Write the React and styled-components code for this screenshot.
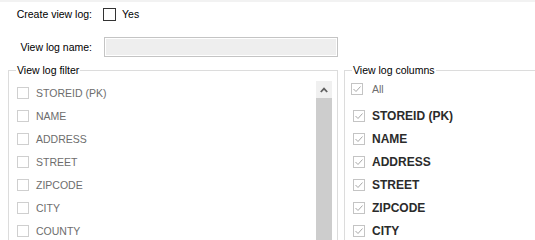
import React from 'react';
import styled, { createGlobalStyle } from 'styled-components';

const GlobalStyle = createGlobalStyle`
  html, body {
    margin: 0;
    background: #ffffff;
    overflow: hidden;
  }
  body {
    font-family: "Liberation Sans", Arial, sans-serif;
    font-size: 10.5px;
    color: #000;
  }
`;

const filterColumns = ['STOREID (PK)', 'NAME', 'ADDRESS', 'STREET', 'ZIPCODE', 'CITY', 'COUNTY'];
const logColumns = ['STOREID (PK)', 'NAME', 'ADDRESS', 'STREET', 'ZIPCODE', 'CITY'];

const Page = styled.div`
  width: 535px;
  height: 240px;
  overflow: hidden;
`;

const TopStrip = styled.div`
  height: 2px;
  background: #f2f2f2;
`;

const Form = styled.div`
  display: grid;
  grid-template-columns: 92px auto;
  column-gap: 11px;
  row-gap: 16px;
  align-items: center;
  padding-top: 6px;
`;

const Label = styled.div`
  text-align: right;
  line-height: 13px;
  white-space: nowrap;
`;

const Inline = styled.div`
  display: flex;
  align-items: center;
  gap: 6px;
  line-height: 13px;
`;

const Box = styled.span`
  box-sizing: border-box;
  display: inline-flex;
  align-items: center;
  justify-content: center;
  flex: none;
  width: ${({ $size }) => $size || 12}px;
  height: ${({ $size }) => $size || 12}px;
  border: 1px solid ${({ $border }) => $border || '#cfcfcf'};
  background: #fff;
`;

const NameInput = styled.div`
  box-sizing: border-box;
  margin-left: 1px;
  width: 234px;
  height: 20px;
  border: 1px solid #c4c4c4;
  box-shadow: inset 0 0 0 1px #ffffff;
  background: #eeeeee;
`;

const Groups = styled.div`
  display: flex;
  gap: 6px;
  margin-top: 7px;
  padding-left: 8px;
`;

const Group = styled.fieldset`
  box-sizing: border-box;
  margin: 0;
  padding: 0;
  border: 1px solid #dcdcdc;
  width: ${({ $width }) => $width}px;
  height: 200px;
  flex: none;
  min-width: 0;
`;

const Legend = styled.legend`
  margin-left: 7px;
  padding: 0 1px;
  line-height: 12px;
  white-space: nowrap;
`;

const FilterBody = styled.div`
  display: flex;
  margin-top: 5px;
  padding-left: 8px;
  padding-right: 5px;
`;

const List = styled.div`
  flex: 1;
  display: flex;
  flex-direction: column;
`;

const Row = styled.div`
  display: flex;
  align-items: center;
  height: 23px;
  gap: ${({ $gap }) => $gap || 7}px;
  padding-left: ${({ $indent }) => $indent || 0}px;
  color: ${({ $bold }) => ($bold ? '#2b2b2b' : '#6d6d6d')};
  font-weight: ${({ $bold }) => ($bold ? 700 : 400)};
  font-size: ${({ $bold }) => ($bold ? 12 : 10.5)}px;
  white-space: nowrap;
`;

const Scrollbar = styled.div`
  width: 16px;
  display: flex;
  flex-direction: column;
  flex: none;
`;

const ArrowButton = styled.div`
  height: 17px;
  background: #f0f0f0;
  display: flex;
  align-items: center;
  justify-content: center;
`;

const Thumb = styled.div`
  flex: 1;
  height: 200px;
  background: #cdcdcd;
`;

const ColumnsBody = styled.div`
  display: flex;
  flex-direction: column;
  margin-top: 1px;
  padding-left: 6px;
`;

const AllRow = styled(Row)`
  margin-bottom: 4px;
`;

const Check = () => (
  <svg width="10" height="10" viewBox="0 0 10 10">
    <polyline points="1.5,5 4,7.5 8.5,2.5" fill="none" stroke="#a8a8a8" strokeWidth="1" />
  </svg>
);

const UpArrow = () => (
  <svg width="8" height="6" viewBox="0 0 8 6">
    <polyline points="0.8,5 4,1.6 7.2,5" fill="none" stroke="#606060" strokeWidth="1.8" />
  </svg>
);

export default function App() {
  return (
    <Page>
      <GlobalStyle />
      <TopStrip />
      <Form>
        <Label>Create view log:</Label>
        <Inline>
          <Box $size={13} $border="#333333" />
          <span>Yes</span>
        </Inline>
        <Label>View log name:</Label>
        <NameInput />
      </Form>
      <Groups>
        <Group $width={330}>
          <Legend>View log filter</Legend>
          <FilterBody>
            <List>
              {filterColumns.map((c) => (
                <Row key={c}>
                  <Box />
                  <span>{c}</span>
                </Row>
              ))}
            </List>
            <Scrollbar>
              <ArrowButton>
                <UpArrow />
              </ArrowButton>
              <Thumb />
            </Scrollbar>
          </FilterBody>
        </Group>
        <Group $width={220}>
          <Legend>View log columns</Legend>
          <ColumnsBody>
            <AllRow $gap={9}>
              <Box $border="#c4c4c4">
                <Check />
              </Box>
              <span>All</span>
            </AllRow>
            {logColumns.map((c) => (
              <Row key={c} $bold $indent={2} $gap={7}>
                <Box $border="#c4c4c4">
                  <Check />
                </Box>
                <span>{c}</span>
              </Row>
            ))}
          </ColumnsBody>
        </Group>
      </Groups>
    </Page>
  );
}
